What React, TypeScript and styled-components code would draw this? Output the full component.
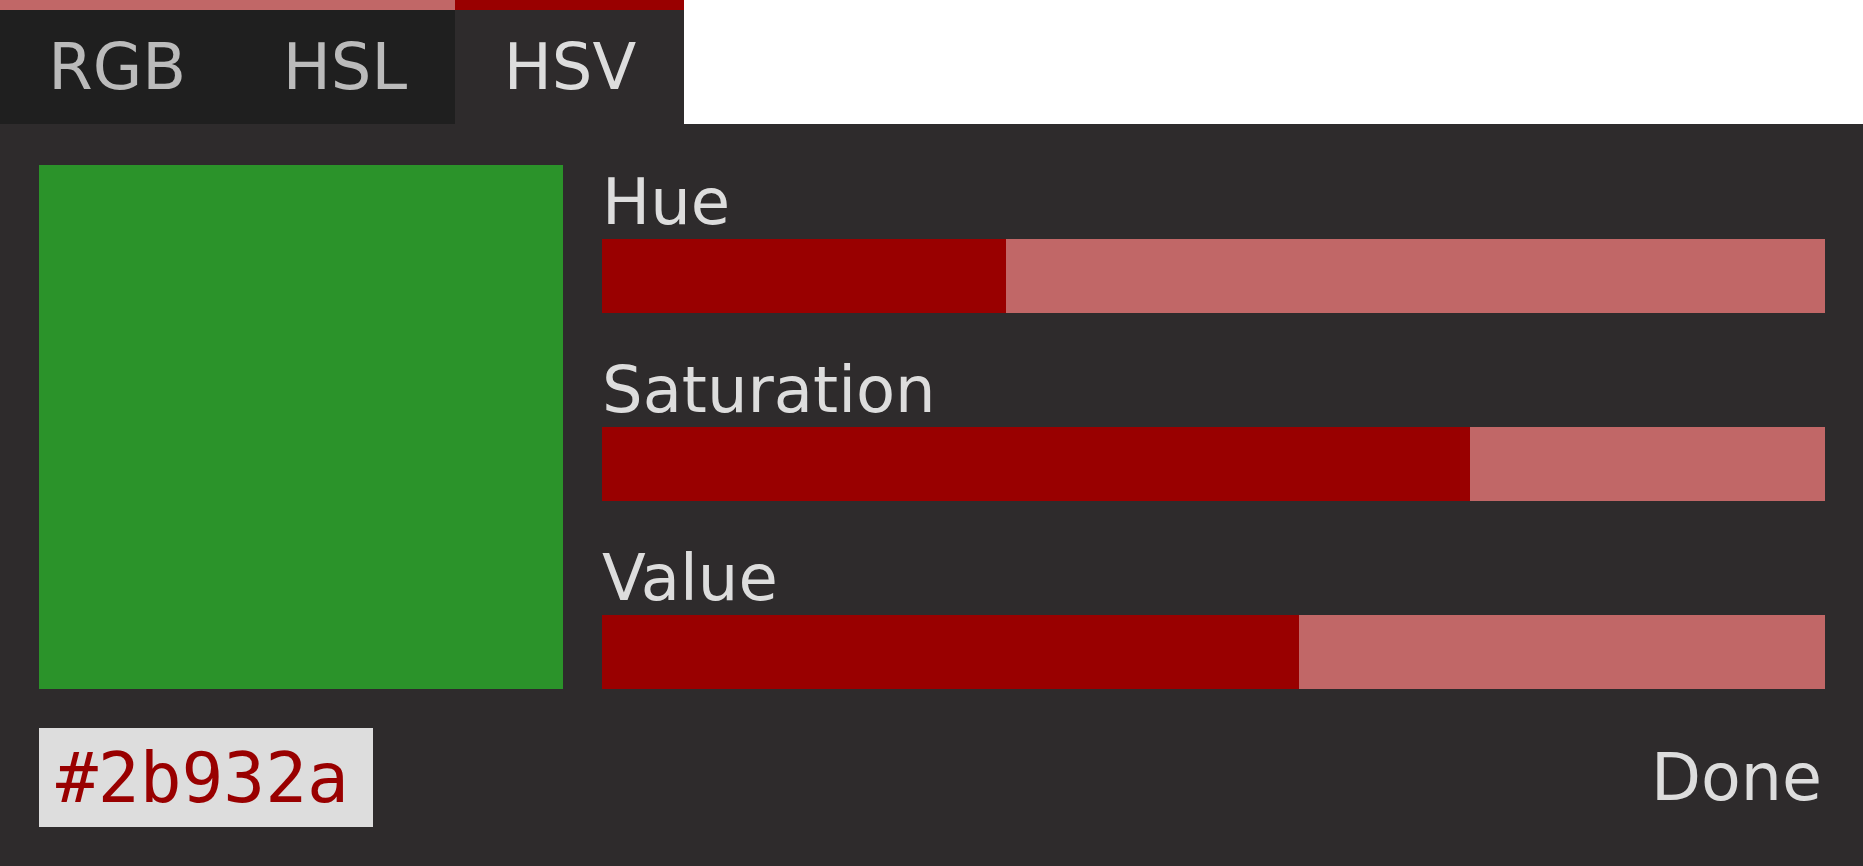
import React, { useMemo, useState } from "react";
import styled, { createGlobalStyle } from "styled-components";

const GlobalStyle = createGlobalStyle`
  html, body {
    margin: 0;
    padding: 0;
    background: #ffffff;
  }
  body {
    font-family: "DejaVu Sans", "Liberation Sans", sans-serif;
  }
  * { box-sizing: border-box; }
`;

const Picker = styled.div`
  width: 1863px;
  height: 866px;
  display: flex;
  flex-direction: column;
`;

const TabBar = styled.div`
  display: flex;
  align-self: flex-start;
  height: 124px;
`;

const Tab = styled.button<{ $active?: boolean }>`
  appearance: none;
  border: none;
  border-top: 10px solid ${(p) => (p.$active ? "#990000" : "#c16767")};
  margin: 0;
  padding: 0 48.25px;
  height: 124px;
  display: flex;
  align-items: center;
  background: ${(p) => (p.$active ? "#2e2b2c" : "#1f1f1f")};
  color: ${(p) => (p.$active ? "#dddddd" : "#bbbbbb")};
  font-family: "DejaVu Sans", sans-serif;
  font-size: 64px;
  line-height: normal;
  cursor: pointer;
`;

const Panel = styled.div`
  flex: 1;
  background: #2e2b2c;
  padding: 41px 38px 39px 39px;
  display: flex;
  flex-direction: column;
  gap: 39px;
`;

const Main = styled.div`
  display: flex;
  gap: 39px;
`;

const Swatch = styled.div<{ $color: string }>`
  width: 524px;
  height: 524px;
  flex: none;
  background: ${(p) => p.$color};
`;

const Sliders = styled.div`
  flex: 1;
  display: flex;
  flex-direction: column;
  gap: 40px;
`;

const SliderGroup = styled.div`
  display: flex;
  flex-direction: column;
`;

const SliderLabel = styled.div`
  color: #dddddd;
  font-size: 64px;
  line-height: 74px;
`;

const Track = styled.div`
  height: 74px;
  background: #c16767;
  display: flex;
`;

const Fill = styled.div`
  height: 100%;
  background: #990000;
`;

const Footer = styled.div`
  display: flex;
  align-items: center;
  justify-content: space-between;
`;

const HexInput = styled.input`
  width: 334px;
  height: 99px;
  border: none;
  outline: none;
  margin: 0;
  padding: 0 0 0 17px;
  background: #dddddd;
  color: #990000;
  font-family: "DejaVu Sans Mono", "Liberation Mono", monospace;
  font-size: 69.5px;
`;

const DoneButton = styled.button`
  appearance: none;
  border: none;
  background: transparent;
  padding: 0;
  margin: 0 3px 0 0;
  color: #dddddd;
  font-family: "DejaVu Sans", sans-serif;
  font-size: 65px;
  line-height: normal;
  cursor: pointer;
`;

function hexToHsv(hex: string) {
  const n = parseInt(hex.slice(1), 16);
  const r = ((n >> 16) & 255) / 255;
  const g = ((n >> 8) & 255) / 255;
  const b = (n & 255) / 255;
  const max = Math.max(r, g, b);
  const min = Math.min(r, g, b);
  const d = max - min;
  let h = 0;
  if (d !== 0) {
    if (max === r) h = ((g - b) / d) % 6;
    else if (max === g) h = (b - r) / d + 2;
    else h = (r - g) / d + 4;
    h *= 60;
    if (h < 0) h += 360;
  }
  // displayed values are truncated: hue to whole degrees, s/v to whole percent
  return {
    h: Math.floor(h) / 360,
    s: Math.floor((max === 0 ? 0 : d / max) * 100) / 100,
    v: Math.floor(max * 100) / 100,
  };
}

const Slider: React.FC<{ label: string; value: number }> = ({ label, value }) => (
  <SliderGroup>
    <SliderLabel>{label}</SliderLabel>
    <Track>
      <Fill style={{ width: `${value * 100}%` }} />
    </Track>
  </SliderGroup>
);

export default function App() {
  const [mode, setMode] = useState("HSV");
  const [hex, setHex] = useState("#2b932a");
  const hsv = useMemo(() => hexToHsv(hex), [hex]);

  return (
    <>
      <GlobalStyle />
      <Picker>
        <TabBar>
          {["RGB", "HSL", "HSV"].map((m) => (
            <Tab key={m} $active={m === mode} onClick={() => setMode(m)}>
              {m}
            </Tab>
          ))}
        </TabBar>
        <Panel>
          <Main>
            <Swatch $color={hex} />
            <Sliders>
              <Slider label="Hue" value={hsv.h} />
              <Slider label="Saturation" value={hsv.s} />
              <Slider label="Value" value={hsv.v} />
            </Sliders>
          </Main>
          <Footer>
            <HexInput value={hex} onChange={(e) => setHex(e.target.value)} spellCheck={false} />
            <DoneButton>Done</DoneButton>
          </Footer>
        </Panel>
      </Picker>
    </>
  );
}
